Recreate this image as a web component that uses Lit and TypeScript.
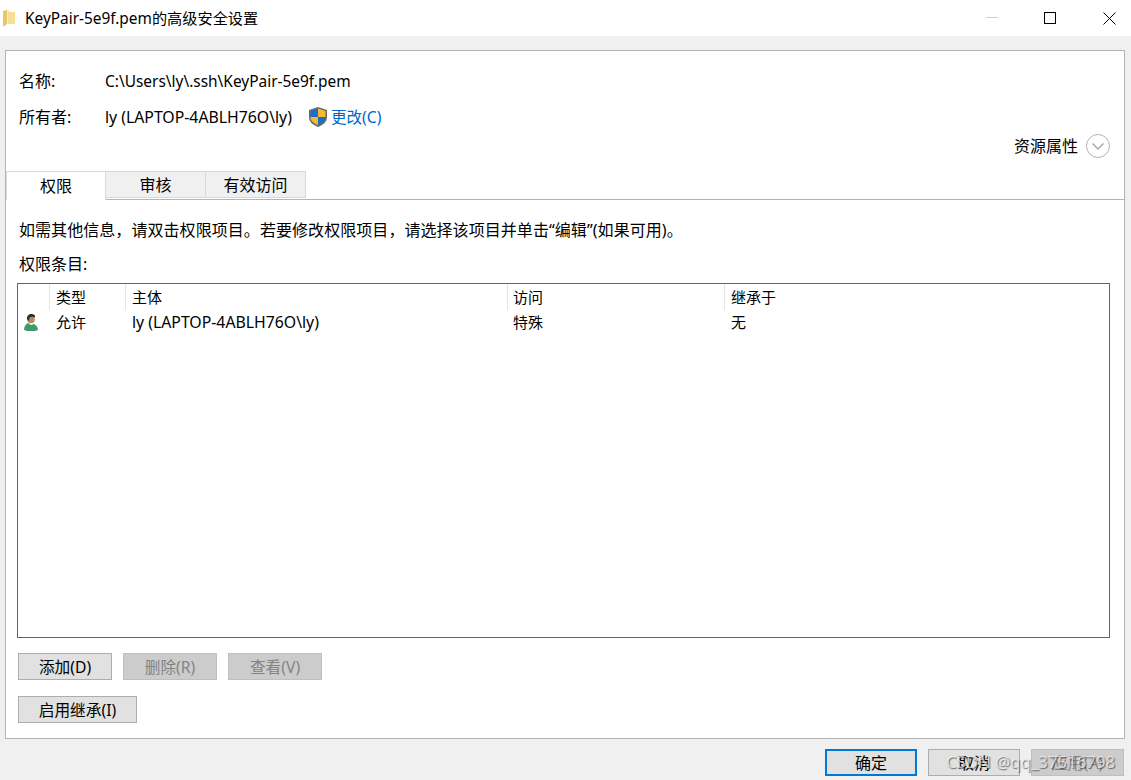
import { LitElement, html, css } from "lit";
import { customElement } from "lit/decorators.js";

@customElement("app-root")
export class AppRoot extends LitElement {
  static styles = css`
    :host { display: block; width: 1131px; height: 780px; position: relative; overflow: hidden; background: #f0f0f0; color: #000;
      font-family: "Noto Sans", "Noto Sans CJK SC", sans-serif; font-size: 16px; line-height: 20px; }
    .l { font-size: 15.45px; }
    .w { font-size: 15.8px; }
    .window { display: flex; flex-direction: column; height: 780px; }
    .titlebar { height: 36px; background: #fff; display: flex; align-items: center; flex: none; padding-left: 3px; }
    .title { margin-left: 10px; font-size: 15.2px; }
    .title .l { font-size: 15.4px; }
    .caps { margin-left: auto; display: flex; height: 36px; align-items: center; }
    .cap { width: 44px; height: 36px; display: flex; align-items: center; justify-content: center; }
    .cap.min { margin-right: 14px; }
    .cap.max { margin-right: 15px; }
    .panel { margin: 14px 0 0 5px; width: 1120px; height: 689px; box-sizing: border-box; background: #fff; border: 1px solid #b4b4b4; display: flex; flex-direction: column; flex: none; }
    .info { display: grid; grid-template-columns: 86px auto; padding: 20px 0 0 13px; row-gap: 16px; }
    .value { display: flex; align-items: center; }
    .link { color: #0066cc; font-size: 15.6px; }
    .shield { margin: 0 4px 0 17px; }
    .res { display: flex; justify-content: flex-end; align-items: center; gap: 8px; padding: 6px 14px 0 0; height: 26px; }
    .tabs { display: flex; height: 28px; border-bottom: 1px solid #b4b4b4; margin-top: 12px; padding-left: 0; flex: none; }
    .tab { width: 100px; box-sizing: border-box; height: 27px; background: #f0f0f0; border: 1px solid #d9d9d9; border-left: none; display: flex; align-items: center; justify-content: center; }
    .tab.active { background: #fff; height: 29px; width: 100px; border: 1px solid #d9d9d9; border-bottom: none; position: relative; z-index: 1; }
    .body { padding: 20px 14px 0 11px; display: flex; flex-direction: column; flex: 1; }
    .hint { height: 20px; padding-left: 2px; letter-spacing: 0.06px; }
    .lbl { height: 20px; margin-top: 14px; padding-left: 2px; }
    .list { margin-top: 9px; height: 355px; box-sizing: border-box; border: 1px solid #646464; flex: none; font-size: 15px; }
    .row { display: grid; grid-template-columns: 31px 76px 382px 217px 1fr; height: 26px; align-items: center; }
    .head > div { height: 26px; border-left: 1px solid #e5e5e5; padding-left: 6px; box-sizing: border-box; display: flex; align-items: center; }
    .head > div:first-child { border-left: none; }
    .head > div.acc { padding-left: 5px; }
    .data { height: 24px; }
    .data > div { padding-left: 7px; display: flex; align-items: center; }
    .data > div:first-child { padding-left: 6px; }
    .data > div.acc { padding-left: 6px; }
    .btns { display: flex; gap: 11px; margin-top: 15px; margin-left: 1px; }
    .btn { height: 27px; box-sizing: border-box; width: 94px; background: #e1e1e1; border: 1px solid #adadad; display: flex; align-items: center; justify-content: center; flex: none; font-size: 15.7px; }
    .btn.dis { background: #cccccc; border-color: #bfbfbf; color: #838383; }
    .btn.wide { width: 119px; }
    .btns.second { margin-top: 16px; }
    .footer { display: flex; justify-content: flex-end; gap: 11px; padding: 10px 7px 0 0; }
    .footer .btn { width: 92px; font-size: 16px; }
    .footer .btn.primary { border: 2px solid #0078d7; }
    .footer .btn.last { width: 93px; }
    .mark { position: absolute; left: 946px; top: 750px; font-size: 16.8px; line-height: 24px; color: rgba(240, 240, 240, 0.75); text-shadow: 1px 1px 1px rgba(0, 0, 0, 0.5); white-space: nowrap; }
  `;

  render() {
    return html`
      <div class="window">
        <div class="titlebar">
          <svg width="12" height="17" viewBox="0 0 12 17">
            <path d="M0 1l4-1v14l-4 3z" fill="#e9c768" />
            <path d="M4 0h1l2 2h5v12H4z" fill="#f8de92" />
            <path d="M4 0l1 0v14H4z" fill="#fbedc0" />
          </svg>
          <span class="title"><span class="l">KeyPair-5e9f.pem</span>的高级安全设置</span>
          <div class="caps">
            <div class="cap min">
              <svg width="12" height="12" viewBox="0 0 12 12"><path d="M0 5.500h12" stroke="#cfcfcf" /></svg>
            </div>
            <div class="cap max">
              <svg width="12" height="12" viewBox="0 0 12 12"><rect x=".5" y=".5" width="11" height="11" fill="none" stroke="#000" /></svg>
            </div>
            <div class="cap">
              <svg width="13" height="13" viewBox="0 0 13 13"><path d="M.5.5l12 12M12.5.5l-12 12" stroke="#000" fill="none" /></svg>
            </div>
          </div>
        </div>
        <div class="panel">
          <div class="info">
            <div>名称:</div>
            <div class="value"><span class="l">C:\\Users\\ly\\.ssh\\KeyPair-5e9f.pem</span></div>
            <div>所有者:</div>
            <div class="value">
              <span class="w">ly (LAPTOP-4ABLH76O\\ly)</span>
              <svg class="shield" width="18" height="20" viewBox="0 0 18 20">
                <path d="M9 0l9 3v7c0 5-4 8-9 10-5-2-9-5-9-10V3z" fill="#6a6a6a" />
                <path d="M9 1.500V10H1.500V4z" fill="#1a6fc9" />
                <path d="M9 1.500V10h7.500V4z" fill="#f5b82e" />
                <path d="M9 10H1.500c0 4 3.500 6.500 7.500 8z" fill="#f5b82e" />
                <path d="M9 10h7.500c0 4-3.500 6.500-7.500 8z" fill="#1a6fc9" />
              </svg>
              <span class="link">更改(C)</span>
            </div>
          </div>
          <div class="res">
            <span>资源属性</span>
            <svg width="24" height="24" viewBox="0 0 24 24">
              <circle cx="12" cy="12" r="11.500" fill="#fff" stroke="#b4b4b4" />
              <path d="M6.500 9.500L12 15l5.500-5.500" fill="none" stroke="#a8a8a8" stroke-width="1.500" />
            </svg>
          </div>
          <div class="tabs">
            <div class="tab active">权限</div>
            <div class="tab">审核</div>
            <div class="tab">有效访问</div>
          </div>
          <div class="body">
            <div class="hint">如需其他信息，请双击权限项目。若要修改权限项目，请选择该项目并单击“编辑”(如果可用)。</div>
            <div class="lbl">权限条目:</div>
            <div class="list">
              <div class="row head">
                <div></div><div>类型</div><div>主体</div><div class="acc">访问</div><div>继承于</div>
              </div>
              <div class="row data">
                <div>
                  <svg width="14" height="17" viewBox="0 0 14 17">
                    <path d="M0 16c0-4 2-6 4-7l3 2 3-1c2 1 4 3 4 6l-3 1H3z" fill="#3f9a6a" />
                    <circle cx="7" cy="5.500" r="3.800" fill="#b98a66" />
                    <path d="M3 5c-.5-3 2-5 4.500-5s4 1.500 3.500 3.500c-2-1-4-1-5.500 0L5 7z" fill="#2e2a26" />
                  </svg>
                </div>
                <div>允许</div>
                <div><span class="w">ly (LAPTOP-4ABLH76O\\ly)</span></div>
                <div class="acc">特殊</div>
                <div>无</div>
              </div>
            </div>
            <div class="btns">
              <div class="btn">添加(D)</div>
              <div class="btn dis">删除(R)</div>
              <div class="btn dis">查看(V)</div>
            </div>
            <div class="btns second">
              <div class="btn wide">启用继承(I)</div>
            </div>
          </div>
        </div>
        <div class="footer">
          <div class="btn primary">确定</div>
          <div class="btn">取消</div>
          <div class="btn dis last">应用(A)</div>
        </div>
      </div>
      <div class="mark">CSDN @qq_37516798</div>
    `;
  }
}
